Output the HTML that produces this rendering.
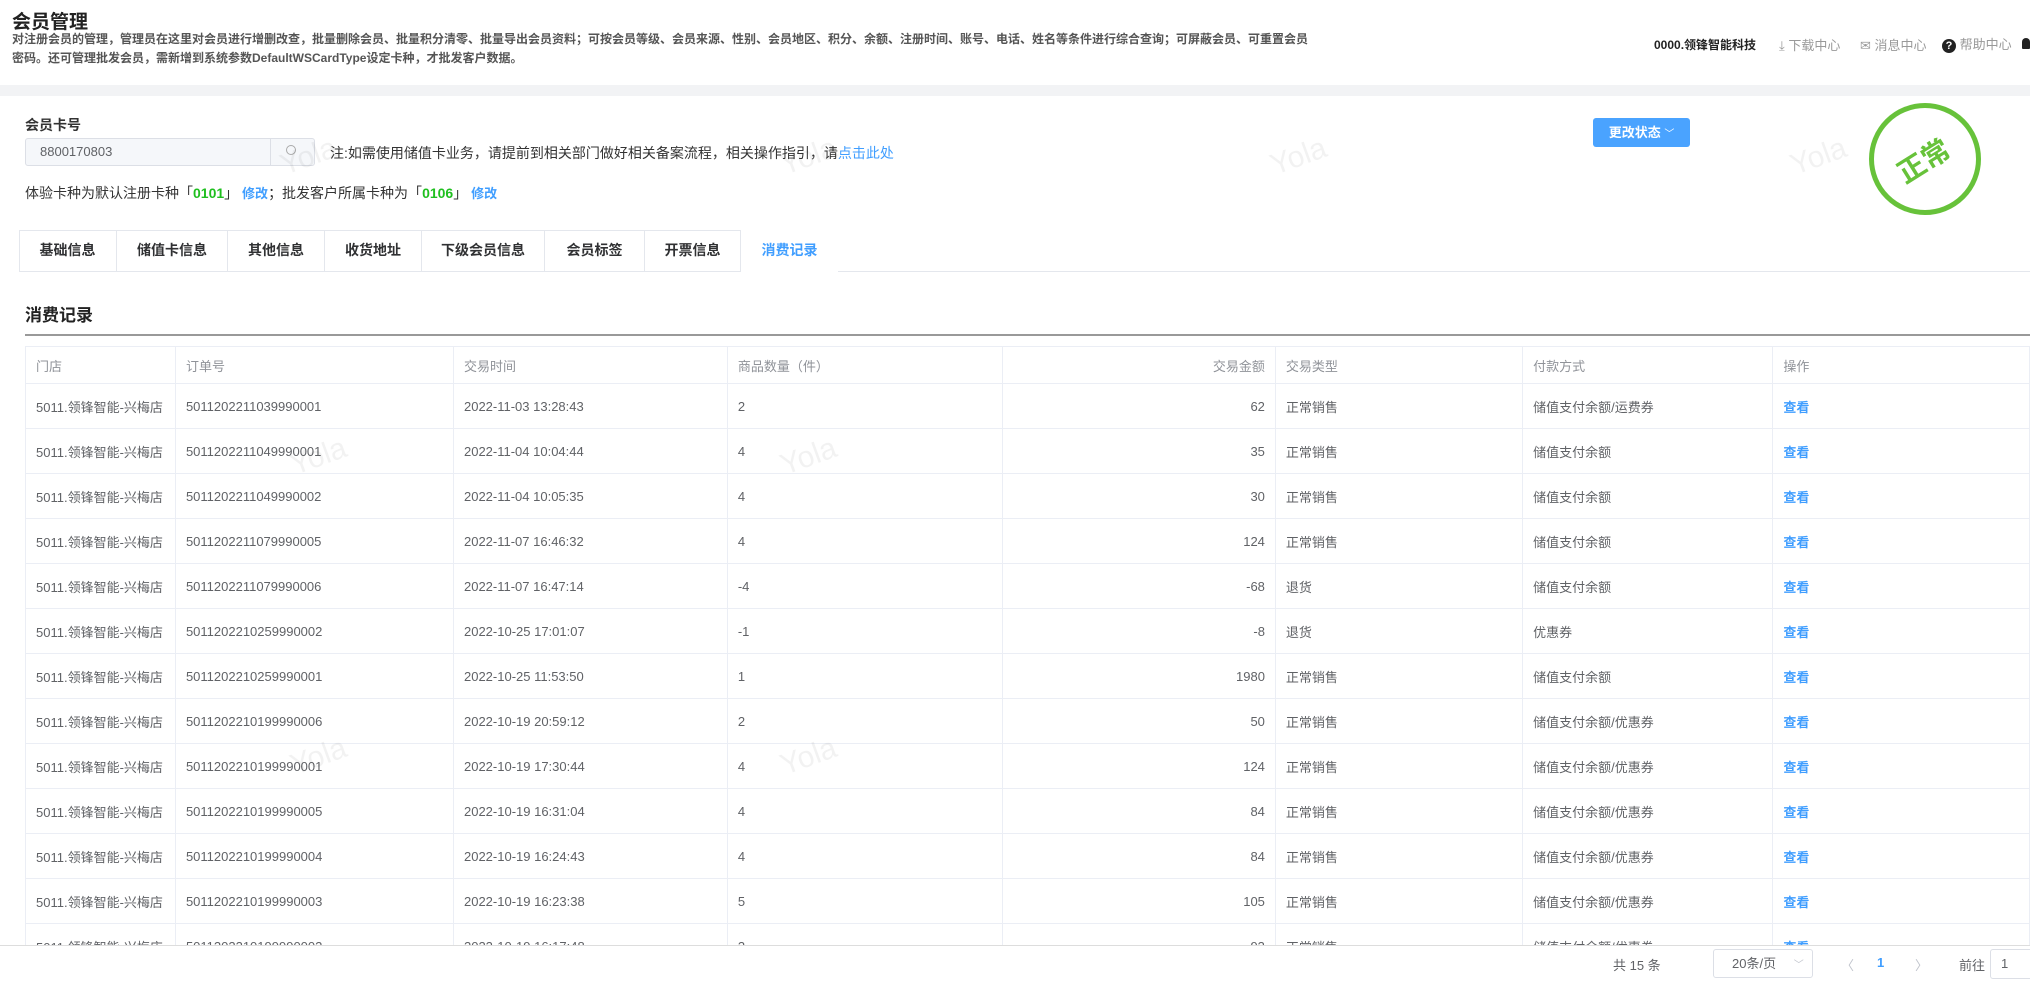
<!DOCTYPE html>
<html><head><meta charset="utf-8"><style>
*{margin:0;padding:0;box-sizing:border-box}
body{width:2030px;height:995px;overflow:hidden;background:#fff;font-family:"Liberation Sans","Noto Sans CJK SC",sans-serif;color:#303133;position:relative}
.a{position:absolute;white-space:nowrap}
.desc{left:12px;font-size:12px;font-weight:bold;color:#555;line-height:19px}
.hd{font-size:13px;color:#999}
table{position:absolute;left:25px;top:346px;border-collapse:collapse;font-size:13px;color:#606266;table-layout:fixed}
td,th{border:1px solid #ebeef5;height:45px;padding:0 10px;text-align:left;font-weight:normal;white-space:nowrap;overflow:hidden}
th{height:37px;color:#909399}
td.r{text-align:right}
td.l{color:#409eff;font-weight:bold}
.wm{position:absolute;color:rgba(0,0,0,0.05);font-size:30px;transform:rotate(-20deg)}
.tab{position:absolute;top:230px;height:41px;line-height:41px;text-align:center;font-size:14px;font-weight:bold;color:#303133;border-right:1px solid #e4e7ed}
</style></head><body>
<div class="a" style="left:12px;top:7px;font-size:19px;font-weight:bold;color:#222">会员管理</div>
<div class="a desc" style="top:30px">对注册会员的管理，管理员在这里对会员进行增删改查，批量删除会员、批量积分清零、批量导出会员资料；可按会员等级、会员来源、性别、会员地区、积分、余额、注册时间、账号、电话、姓名等条件进行综合查询；可屏蔽会员、可重置会员</div>
<div class="a desc" style="top:49px">密码。还可管理批发会员，需新增到系统参数DefaultWSCardType设定卡种，才批发客户数据。</div>
<div class="a" style="left:1654px;top:36px;font-size:12px;font-weight:bold;color:#222">0000.领锋智能科技</div>
<div class="a hd" style="left:1779px;top:35px">⤓ 下载中心</div>
<div class="a hd" style="left:1860px;top:35px">✉ 消息中心</div>
<div class="a hd" style="left:1942px;top:34px"><span style="display:inline-block;width:14px;height:14px;border-radius:50%;background:#222;color:#fff;font-size:11px;text-align:center;line-height:14px;font-weight:bold">?</span> 帮助中心</div>
<div class="a" style="left:2022px;top:38px;width:8px;height:11px;background:#222;border-radius:4px 4px 1px 1px"></div>
<div class="a" style="left:0;top:85px;width:2030px;height:11px;background:#f2f3f5"></div>
<div class="a" style="left:25px;top:115px;font-size:14px;font-weight:bold;color:#333">会员卡号</div>
<div class="a" style="left:25px;top:138px;width:290px;height:28px;border:1px solid #dcdfe6;background:#f5f7fa;border-radius:3px"></div>
<div class="a" style="left:270px;top:138px;width:1px;height:28px;background:#dcdfe6"></div>
<div class="a" style="left:40px;top:144px;font-size:13px;color:#606266">8800170803</div>
<div class="a" style="left:286px;top:145px;width:10px;height:10px;border:1px solid #aaa;border-radius:50%"></div>
<div class="a" style="left:330px;top:143px;font-size:14px;color:#333">注:如需使用储值卡业务，请提前到相关部门做好相关备案流程，相关操作指引，请<span style="color:#409eff">点击此处</span></div>
<div class="a" style="left:25px;top:183px;font-size:14px;color:#333">体验卡种为默认注册卡种「<span style="color:#1fbf1f;font-weight:bold">0101</span>」 <span style="color:#409eff;font-weight:bold;font-size:13px">修改</span>；批发客户所属卡种为「<span style="color:#1fbf1f;font-weight:bold">0106</span>」 <span style="color:#409eff;font-weight:bold;font-size:13px">修改</span></div>
<div class="a" style="left:1593px;top:118px;width:97px;height:29px;background:#4aa3ff;border-radius:3px;color:#fff;font-size:13px;font-weight:bold;line-height:29px;text-align:center">更改状态 <span style="font-weight:normal;font-size:10px">﹀</span></div>
<div class="a" style="left:1869px;top:103px;width:112px;height:112px;border:5px solid #67c23a;border-radius:50%"></div>
<div class="a" style="left:1895px;top:140px;font-size:28px;font-weight:bold;color:#67c23a;transform:rotate(-32deg)">正常</div>
<div class="a" style="left:19px;top:230px;width:819px;height:42px;border:1px solid #e4e7ed;border-bottom:none;background:#fff"></div>
<div class="a" style="left:19px;top:271px;width:2011px;height:1px;background:#e4e7ed"></div>
<div class="tab" style="left:19px;width:98px">基础信息</div>
<div class="tab" style="left:117px;width:111px">储值卡信息</div>
<div class="tab" style="left:228px;width:97px">其他信息</div>
<div class="tab" style="left:325px;width:97px">收货地址</div>
<div class="tab" style="left:422px;width:123px">下级会员信息</div>
<div class="tab" style="left:545px;width:100px">会员标签</div>
<div class="tab" style="left:645px;width:96px">开票信息</div>
<div class="tab" style="left:741px;width:97px;color:#409eff;border-right:none;height:42px;background:#fff">消费记录</div>
<div class="a" style="left:25px;top:301px;font-size:17px;font-weight:bold;color:#222">消费记录</div>
<div class="a" style="left:25px;top:334px;width:2005px;height:2px;background:#999"></div>
<div style="position:absolute;left:0;top:0;width:2030px;height:946px;overflow:hidden">
<table>
<colgroup><col style="width:150px"><col style="width:280px"><col style="width:276px"><col style="width:278px"><col style="width:276px"><col style="width:250px"><col style="width:252px"><col style="width:260px"></colgroup>
<tr><th>门店</th><th>订单号</th><th>交易时间</th><th>商品数量（件）</th><th style="text-align:right">交易金额</th><th>交易类型</th><th>付款方式</th><th>操作</th></tr>
<tr><td>5011.领锋智能-兴梅店</td><td>5011202211039990001</td><td>2022-11-03 13:28:43</td><td>2</td><td class="r">62</td><td>正常销售</td><td>储值支付余额/运费券</td><td class="l">查看</td></tr>
<tr><td>5011.领锋智能-兴梅店</td><td>5011202211049990001</td><td>2022-11-04 10:04:44</td><td>4</td><td class="r">35</td><td>正常销售</td><td>储值支付余额</td><td class="l">查看</td></tr>
<tr><td>5011.领锋智能-兴梅店</td><td>5011202211049990002</td><td>2022-11-04 10:05:35</td><td>4</td><td class="r">30</td><td>正常销售</td><td>储值支付余额</td><td class="l">查看</td></tr>
<tr><td>5011.领锋智能-兴梅店</td><td>5011202211079990005</td><td>2022-11-07 16:46:32</td><td>4</td><td class="r">124</td><td>正常销售</td><td>储值支付余额</td><td class="l">查看</td></tr>
<tr><td>5011.领锋智能-兴梅店</td><td>5011202211079990006</td><td>2022-11-07 16:47:14</td><td>-4</td><td class="r">-68</td><td>退货</td><td>储值支付余额</td><td class="l">查看</td></tr>
<tr><td>5011.领锋智能-兴梅店</td><td>5011202210259990002</td><td>2022-10-25 17:01:07</td><td>-1</td><td class="r">-8</td><td>退货</td><td>优惠券</td><td class="l">查看</td></tr>
<tr><td>5011.领锋智能-兴梅店</td><td>5011202210259990001</td><td>2022-10-25 11:53:50</td><td>1</td><td class="r">1980</td><td>正常销售</td><td>储值支付余额</td><td class="l">查看</td></tr>
<tr><td>5011.领锋智能-兴梅店</td><td>5011202210199990006</td><td>2022-10-19 20:59:12</td><td>2</td><td class="r">50</td><td>正常销售</td><td>储值支付余额/优惠券</td><td class="l">查看</td></tr>
<tr><td>5011.领锋智能-兴梅店</td><td>5011202210199990001</td><td>2022-10-19 17:30:44</td><td>4</td><td class="r">124</td><td>正常销售</td><td>储值支付余额/优惠券</td><td class="l">查看</td></tr>
<tr><td>5011.领锋智能-兴梅店</td><td>5011202210199990005</td><td>2022-10-19 16:31:04</td><td>4</td><td class="r">84</td><td>正常销售</td><td>储值支付余额/优惠券</td><td class="l">查看</td></tr>
<tr><td>5011.领锋智能-兴梅店</td><td>5011202210199990004</td><td>2022-10-19 16:24:43</td><td>4</td><td class="r">84</td><td>正常销售</td><td>储值支付余额/优惠券</td><td class="l">查看</td></tr>
<tr><td>5011.领锋智能-兴梅店</td><td>5011202210199990003</td><td>2022-10-19 16:23:38</td><td>5</td><td class="r">105</td><td>正常销售</td><td>储值支付余额/优惠券</td><td class="l">查看</td></tr>
<tr><td>5011.领锋智能-兴梅店</td><td>5011202210199990002</td><td>2022-10-19 16:17:48</td><td>3</td><td class="r">93</td><td>正常销售</td><td>储值支付余额/优惠券</td><td class="l">查看</td></tr>
</table></div>
<div class="a" style="left:0;top:945px;width:2030px;height:1px;background:#ddd"></div>
<div class="a" style="left:1613px;top:955px;font-size:13px;color:#606266">共 15 条</div>
<div class="a" style="left:1713px;top:949px;width:100px;height:29px;border:1px solid #dcdfe6;border-radius:3px;font-size:13px;color:#606266;line-height:27px;padding-left:18px">20条/页 <span style="color:#c0c4cc;margin-left:14px;font-size:10px">﹀</span></div>
<div class="a" style="left:1841px;top:955px;font-size:13px;color:#c0c4cc">〈</div>
<div class="a" style="left:1877px;top:955px;font-size:13px;color:#409eff;font-weight:bold">1</div>
<div class="a" style="left:1915px;top:955px;font-size:13px;color:#c0c4cc">〉</div>
<div class="a" style="left:1959px;top:955px;font-size:13px;color:#606266">前往</div>
<div class="a" style="left:1990px;top:949px;width:50px;height:30px;border:1px solid #dcdfe6;border-radius:3px;font-size:13px;color:#606266;line-height:28px;padding-left:10px">1</div>
<div class="wm" style="left:280px;top:140px">Yola</div>
<div class="wm" style="left:780px;top:140px">Yola</div>
<div class="wm" style="left:1270px;top:140px">Yola</div>
<div class="wm" style="left:1790px;top:140px">Yola</div>
<div class="wm" style="left:290px;top:440px">Yola</div>
<div class="wm" style="left:780px;top:440px">Yola</div>
<div class="wm" style="left:290px;top:740px">Yola</div>
<div class="wm" style="left:780px;top:740px">Yola</div>
</body></html>
